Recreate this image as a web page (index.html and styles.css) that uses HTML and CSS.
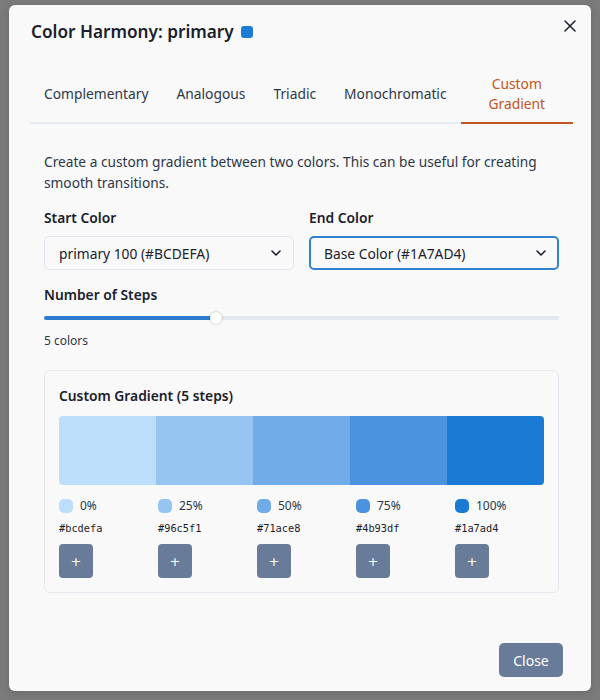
FILE: index.html
```html
<!DOCTYPE html>
<html lang="en">
<head>
<meta charset="utf-8">
<title>Color Harmony</title>
<link rel="stylesheet" href="styles.css">
</head>
<body>
<div class="backdrop">
  <section class="modal" role="dialog" aria-labelledby="mh">
    <header class="modal-header">
      <h2 id="mh" class="modal-title">Color Harmony: primary <span class="title-dot"></span></h2>
      <button class="close-x" aria-label="Close">
        <svg width="12" height="12" viewBox="0 0 12 12"><path d="M1 1L11 11M11 1L1 11" stroke="#1a202c" stroke-width="1.5" stroke-linecap="round"/></svg>
      </button>
    </header>
    <div class="modal-body">
      <nav class="tabs">
        <button class="tab">Complementary</button>
        <button class="tab">Analogous</button>
        <button class="tab">Triadic</button>
        <button class="tab">Monochromatic</button>
        <button class="tab active">Custom Gradient</button>
      </nav>
      <div class="panel">
        <p class="desc">Create a custom gradient between two colors. This can be useful for creating smooth transitions.</p>
        <div class="pickers">
          <div class="field">
            <label class="label">Start Color</label>
            <div class="select">
              <span>primary 100 (#BCDEFA)</span>
              <svg class="chev" width="10" height="6" viewBox="0 0 10 6"><path d="M1 1L5 5L9 1" fill="none" stroke="#1a202c" stroke-width="1.6" stroke-linecap="round" stroke-linejoin="round"/></svg>
            </div>
          </div>
          <div class="field">
            <label class="label">End Color</label>
            <div class="select focused">
              <span>Base Color (#1A7AD4)</span>
              <svg class="chev" width="10" height="6" viewBox="0 0 10 6"><path d="M1 1L5 5L9 1" fill="none" stroke="#1a202c" stroke-width="1.6" stroke-linecap="round" stroke-linejoin="round"/></svg>
            </div>
          </div>
        </div>
        <div class="steps">
          <div class="label">Number of Steps</div>
          <div class="slider">
            <div class="slider-fill" style="width: 172px"></div>
            <div class="slider-thumb"></div>
          </div>
          <div class="count">5 colors</div>
        </div>
        <div class="card">
          <h3 class="card-title">Custom Gradient (5 steps)</h3>
          <div class="bar">
            <div class="seg" style="background:#bcdefa"></div>
            <div class="seg" style="background:#96c5f1"></div>
            <div class="seg" style="background:#71ace8"></div>
            <div class="seg" style="background:#4b93df"></div>
            <div class="seg" style="background:#1a7ad4"></div>
          </div>
          <div class="stops">
            <div class="stop">
              <div class="pct"><span class="dot" style="background:#bcdefa"></span>0%</div>
              <div class="hex">#bcdefa</div>
              <button class="add">+</button>
            </div>
            <div class="stop">
              <div class="pct"><span class="dot" style="background:#96c5f1"></span>25%</div>
              <div class="hex">#96c5f1</div>
              <button class="add">+</button>
            </div>
            <div class="stop">
              <div class="pct"><span class="dot" style="background:#71ace8"></span>50%</div>
              <div class="hex">#71ace8</div>
              <button class="add">+</button>
            </div>
            <div class="stop">
              <div class="pct"><span class="dot" style="background:#4b93df"></span>75%</div>
              <div class="hex">#4b93df</div>
              <button class="add">+</button>
            </div>
            <div class="stop">
              <div class="pct"><span class="dot" style="background:#1a7ad4"></span>100%</div>
              <div class="hex">#1a7ad4</div>
              <button class="add">+</button>
            </div>
          </div>
        </div>
      </div>
    </div>
    <footer class="modal-footer">
      <button class="btn-close">Close</button>
    </footer>
  </section>
</div>
</body>
</html>
```

FILE: styles.css
```css
* { box-sizing: border-box; }

html, body {
  margin: 0;
  padding: 0;
  height: 100%;
}

body {
  background: #7b7b7b;
  font-family: "Noto Sans", "Open Sans", sans-serif;
  color: #1a202c;
}

.backdrop {
  padding: 5px 9px 9px 9px;
  height: 700px;
}

.modal {
  width: 582px;
  height: 686px;
  background: #f9f9f9;
  border-radius: 6px;
  box-shadow: 0 2px 8px rgba(0, 0, 0, 0.15);
  display: flex;
  flex-direction: column;
}

.modal-header {
  display: flex;
  justify-content: space-between;
  align-items: flex-start;
  padding: 12px 15px 0 22px;
}

.modal-title {
  margin: 0;
  font-size: 17.2px;
  line-height: 30px;
  font-weight: 600;
  color: #1a202c;
  display: flex;
  align-items: center;
  gap: 7px;
}

.title-dot {
  width: 12px;
  height: 12px;
  border-radius: 3px;
  background: #1a7ad4;
  display: inline-block;
}

.close-x {
  border: 0;
  background: transparent;
  padding: 0;
  width: 12px;
  height: 12px;
  margin-top: 3px;
  display: flex;
}

.modal-body {
  padding: 19px 18px 0 21px;
  flex: 1;
}

.tabs {
  display: flex;
  align-items: center;
  border-bottom: 2px solid #e5eaf1;
}

.tab {
  border: 0;
  background: transparent;
  font-family: inherit;
  font-size: 13.8px;
  line-height: 20px;
  color: #2d3748;
  padding: 8px 14px;
  white-space: nowrap;
  flex: 0 0 auto;
}

.tab.active {
  white-space: normal;
  flex: 1 1 auto;
  color: #c05621;
  border-bottom: 2px solid #c05621;
  margin-bottom: -2px;
  text-align: center;
  padding-bottom: 8px;
}

.panel {
  padding: 27px 14px 0 14px;
}

.desc {
  margin: 0;
  font-size: 13.7px;
  line-height: 21px;
  color: #2d3748;
}

.pickers {
  display: grid;
  grid-template-columns: 1fr 1fr;
  gap: 15px;
  margin-top: 15px;
}

.label {
  display: block;
  font-size: 13.8px;
  line-height: 20px;
  font-weight: 600;
  color: #1a202c;
  margin-bottom: 8px;
}

.select {
  height: 34px;
  border: 1px solid #e2e8f0;
  border-radius: 5px;
  display: flex;
  align-items: center;
  justify-content: space-between;
  padding: 0 12px 0 14px;
  font-size: 13.8px;
  color: #1a202c;
}

.select.focused {
  border: 2px solid #3182ce;
  padding: 0 11px 0 13px;
}

.steps {
  margin-top: 15px;
}

.steps .label {
  margin-bottom: 0;
}

.slider {
  position: relative;
  height: 4px;
  background: #e2e8f0;
  border-radius: 2px;
  margin-top: 11px;
}

.slider-fill {
  height: 4px;
  background: #2b7bd0;
  border-radius: 2px;
}

.slider-thumb {
  position: absolute;
  left: 166px;
  top: -4px;
  width: 12px;
  height: 12px;
  background: #fff;
  border-radius: 50%;
  box-shadow: 0 0 2px rgba(0, 0, 0, 0.35);
}

.count {
  margin-top: 12px;
  font-size: 12px;
  line-height: 18px;
  color: #2d3748;
}

.card {
  margin-top: 20px;
  border: 1px solid #e5e9f0;
  border-radius: 6px;
  padding: 15px 14px 14px 14px;
}

.card-title {
  margin: 0;
  font-size: 13.8px;
  line-height: 20px;
  font-weight: 600;
  color: #1a202c;
}

.bar {
  display: flex;
  height: 69px;
  margin-top: 10px;
  border-radius: 4px;
  overflow: hidden;
}

.seg {
  flex: 1;
}

.stops {
  display: grid;
  grid-template-columns: repeat(5, 1fr);
  gap: 10px;
  margin-top: 12px;
}

.pct {
  display: flex;
  align-items: center;
  gap: 7px;
  font-size: 12px;
  line-height: 18px;
  color: #2d3748;
}

.dot {
  width: 14px;
  height: 14px;
  border-radius: 5px;
  display: inline-block;
}

.hex {
  margin-top: 5px;
  font-family: "DejaVu Sans Mono", "Liberation Mono", monospace;
  font-size: 10.3px;
  line-height: 16px;
  color: #1a202c;
}

.add {
  margin-top: 8px;
  width: 34px;
  height: 34px;
  border: 0;
  border-radius: 4px;
  background: #687b99;
  color: #fff;
  font-family: "DejaVu Sans", sans-serif;
  font-size: 13px;
  padding: 0;
}

.modal-footer {
  display: flex;
  justify-content: flex-end;
  padding: 0 28px 14px 0;
}

.btn-close {
  width: 64px;
  height: 34px;
  border: 0;
  border-radius: 5px;
  background: #687b99;
  color: #fff;
  font-family: inherit;
  font-size: 14px;
  padding: 0;
}
```
